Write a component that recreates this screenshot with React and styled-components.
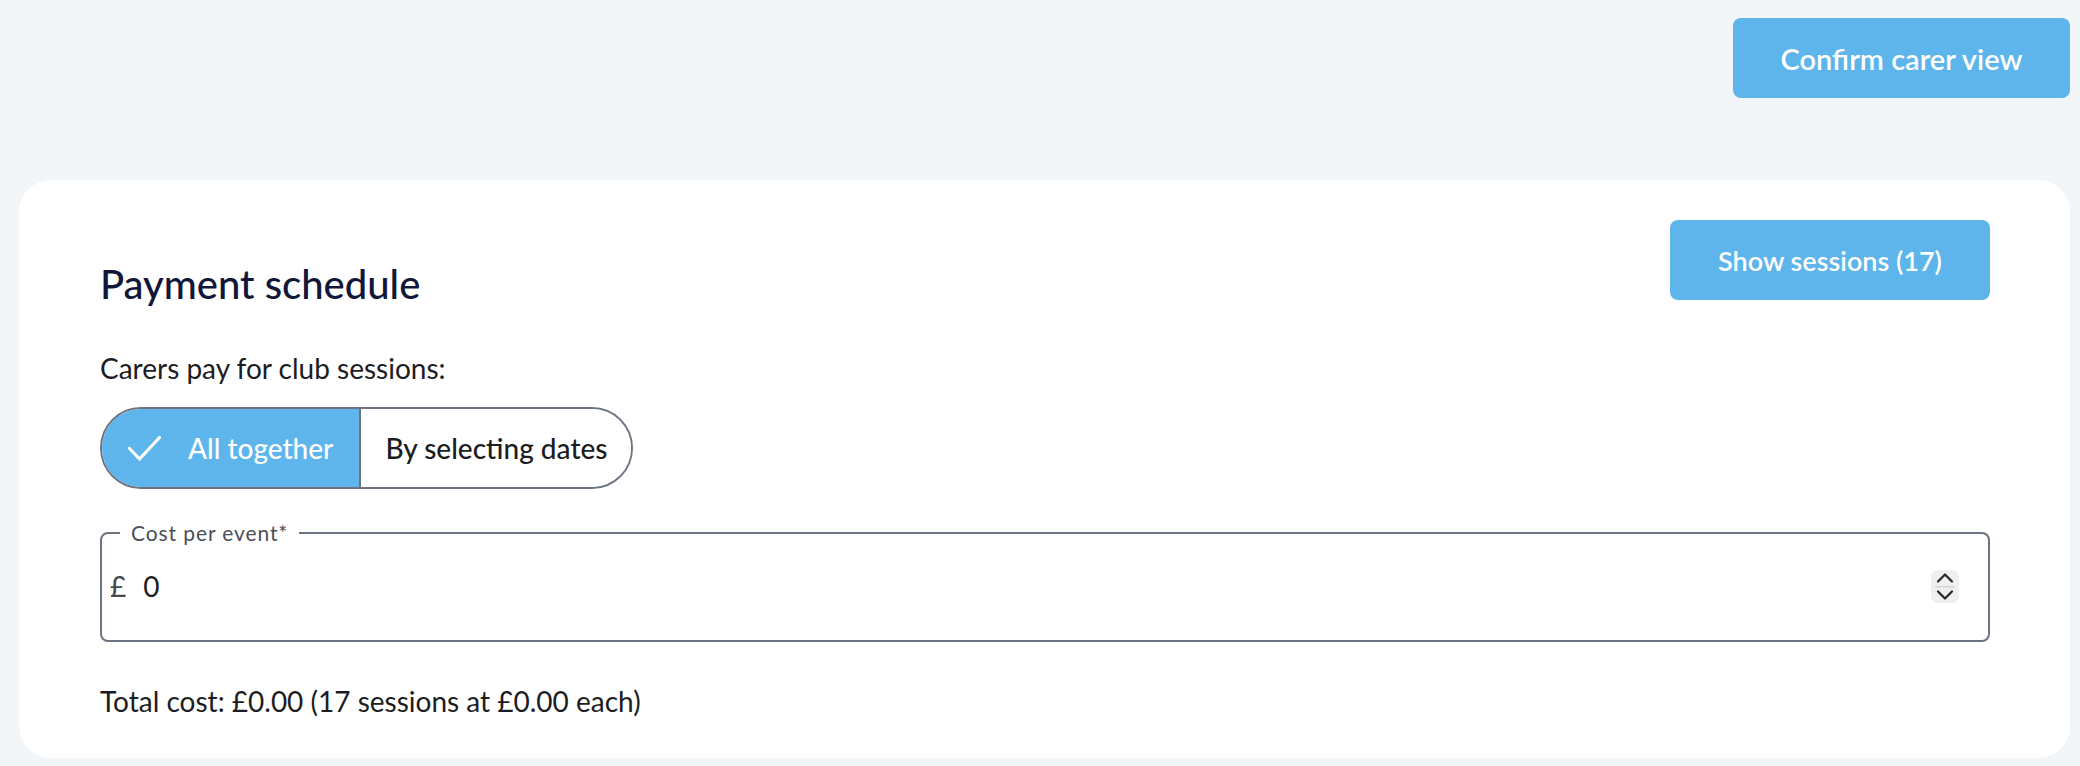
import React from 'react';
import styled, { createGlobalStyle } from 'styled-components';

const Global = createGlobalStyle`
  html, body { margin: 0; padding: 0; background: #f3f6f9; }
  body { font-family: "Lato", "Open Sans", sans-serif; color: #1c1d22; }
  * { box-sizing: border-box; }
`;

const Page = styled.div`
  padding: 18px 10px 8px 19px;
`;

const TopBar = styled.div`
  display: flex;
  justify-content: flex-end;
  margin-bottom: 82px;
`;

const PrimaryButton = styled.button`
  width: ${(p) => p.$w}px;
  height: 80px;
  border: none;
  border-radius: 8px;
  background: #5db5ec;
  color: #ffffff;
  font-family: inherit;
  font-weight: 600;
  font-size: ${(p) => p.$fs || 27}px;
  cursor: pointer;
`;

const Card = styled.section`
  background: #ffffff;
  border-radius: 32px;
  padding: 40px 80px 37px 81px;
`;

const Header = styled.div`
  display: flex;
  justify-content: space-between;
  align-items: flex-start;
`;

const Title = styled.h2`
  margin: 40px 0 0;
  font-size: 40px;
  line-height: 48px;
  font-weight: 500;
  color: #121638;
`;

const Text = styled.p`
  margin: ${(p) => p.$mt}px 0 0;
  font-size: 28px;
  line-height: 40px;
  font-weight: 400;
  color: #1c1d22;
`;

const ToggleGroup = styled.div`
  display: inline-flex;
  margin-top: 19px;
  height: 82px;
  border: 2px solid #6b7480;
  border-radius: 999px;
  overflow: hidden;
`;

const Segment = styled.button`
  display: flex;
  align-items: center;
  gap: 27px;
  padding: 0 ${(p) => (p.$active ? 26 : 24)}px;
  border: none;
  border-left: ${(p) => (p.$first ? 'none' : '2px solid #6b7480')};
  background: ${(p) => (p.$active ? '#5db5ec' : '#ffffff')};
  color: ${(p) => (p.$active ? '#ffffff' : '#1c1d22')};
  font-family: inherit;
  font-size: 28px;
  font-weight: 500;
  cursor: pointer;
`;

const Field = styled.fieldset`
  margin: 32px 0 0;
  padding: 0 29px 13px 8px;
  height: 121px;
  border: 2px solid #6b7480;
  border-radius: 8px;
`;

const Legend = styled.legend`
  margin-left: 10px;
  padding: 0 11px;
  font-size: 21px;
  line-height: 24px;
  letter-spacing: 0.9px;
  color: #4b5058;
`;

const InputRow = styled.div`
  display: flex;
  align-items: center;
  height: 82px;
`;

const Currency = styled.span`
  font-size: 28px;
  color: #45484e;
  margin-right: 17px;
`;

const NumberInput = styled.input`
  flex: 1;
  border: none;
  outline: none;
  padding: 0;
  font-family: inherit;
  font-size: 28px;
  color: #1c1d22;
  background: transparent;
`;

const Stepper = styled.svg`
  flex: none;
`;

const Check = () => (
  <svg width="33" height="25" viewBox="0 0 33 25" fill="none">
    <path d="M1.5 12.5 L11.5 23 L31.5 1.5" stroke="#ffffff" strokeWidth="3.2" strokeLinecap="round" strokeLinejoin="round" />
  </svg>
);

export default function App() {
  return (
    <>
      <Global />
      <Page>
        <TopBar>
          <PrimaryButton $w={337} $fs={29}>Confirm carer view</PrimaryButton>
        </TopBar>
        <Card>
          <Header>
            <Title>Payment schedule</Title>
            <PrimaryButton $w={320} $fs={27}>Show sessions (17)</PrimaryButton>
          </Header>
          <Text $mt={40}>Carers pay for club sessions:</Text>
          <ToggleGroup>
            <Segment $active $first>
              <Check />
              All together
            </Segment>
            <Segment>By selecting dates</Segment>
          </ToggleGroup>
          <Field>
            <Legend>Cost per event*</Legend>
            <InputRow>
              <Currency>£</Currency>
              <NumberInput type="text" defaultValue="0" readOnly />
              <Stepper width="28" height="33" viewBox="0 0 28 33">
                <rect x="0" y="0" width="28" height="33" rx="7" fill="#efefef" />
                <path d="M7 11.5 L14 4.5 L21 11.5" stroke="#262626" strokeWidth="2.2" fill="none" strokeLinecap="round" strokeLinejoin="round" />
                <line x1="4" y1="16.8" x2="24" y2="16.8" stroke="#d2d2d2" strokeWidth="1.4" />
                <path d="M7 21.5 L14 28.5 L21 21.5" stroke="#262626" strokeWidth="2.2" fill="none" strokeLinecap="round" strokeLinejoin="round" />
              </Stepper>
            </InputRow>
          </Field>
          <Text $mt={39}>Total cost: £0.00 (17 sessions at £0.00 each)</Text>
        </Card>
      </Page>
    </>
  );
}
